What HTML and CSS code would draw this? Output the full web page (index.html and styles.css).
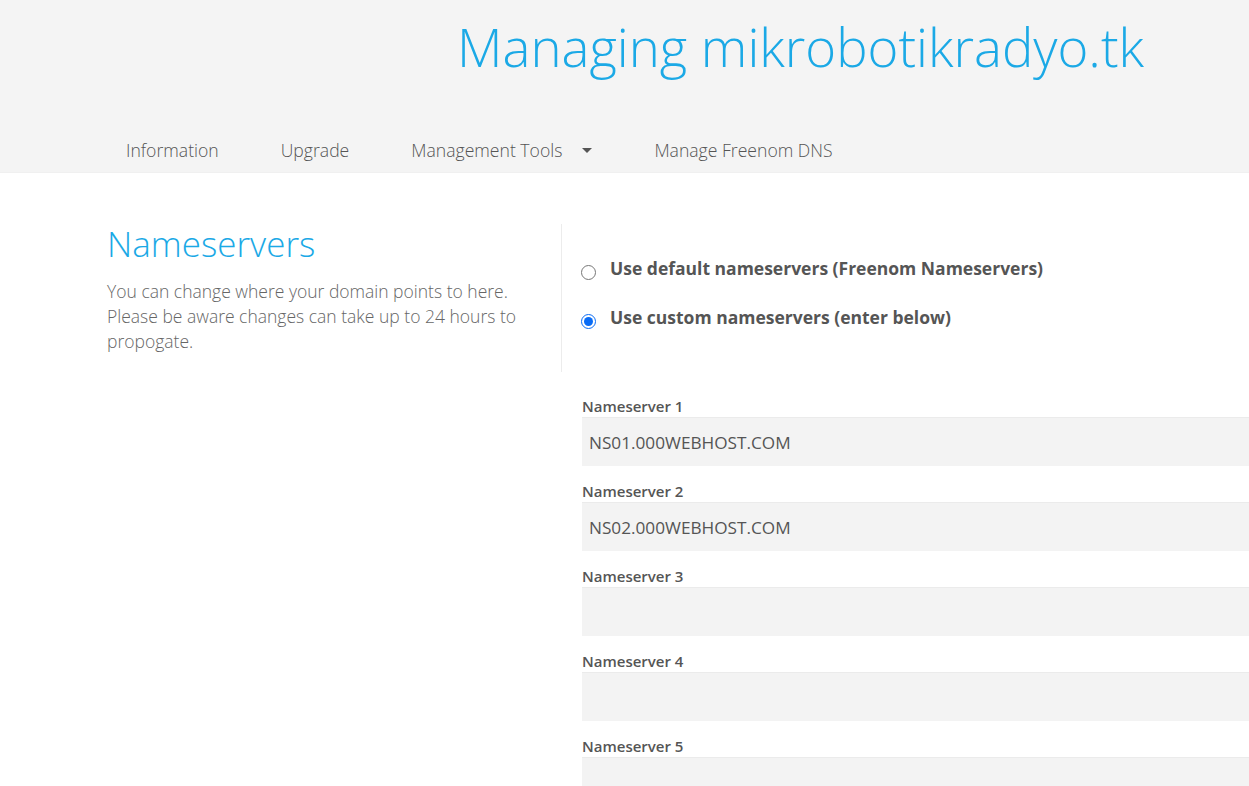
FILE: index.html
```html
<!DOCTYPE html>
<html>
<head>
<meta charset="utf-8">
<link rel="stylesheet" href="styles.css">
</head>
<body>
<header class="header">
  <h1 class="title">Managing mikrobotikradyo.tk</h1>
  <nav class="nav">
    <a class="nav-item">Information</a>
    <a class="nav-item">Upgrade</a>
    <a class="nav-item dropdown">Management Tools <span class="caret"></span></a>
    <a class="nav-item">Manage Freenom DNS</a>
  </nav>
</header>
<main class="main">
  <section class="top-row">
    <div class="intro">
      <h2 class="intro-title">Nameservers</h2>
      <p class="intro-text">You can change where your domain points to here. Please be aware changes can take up to 24 hours to propogate.</p>
    </div>
    <div class="choices">
      <label class="choice"><input type="radio" name="ns" class="radio"> <span>Use default nameservers (Freenom Nameservers)</span></label>
      <label class="choice"><input type="radio" name="ns" class="radio" checked> <span>Use custom nameservers (enter below)</span></label>
    </div>
  </section>
  <section class="fields">
    <div class="field"><label class="field-label">Nameserver 1</label><input class="field-input" type="text" value="NS01.000WEBHOST.COM"></div>
    <div class="field"><label class="field-label">Nameserver 2</label><input class="field-input" type="text" value="NS02.000WEBHOST.COM"></div>
    <div class="field"><label class="field-label">Nameserver 3</label><input class="field-input" type="text" value=""></div>
    <div class="field"><label class="field-label">Nameserver 4</label><input class="field-input" type="text" value=""></div>
    <div class="field"><label class="field-label">Nameserver 5</label><input class="field-input" type="text" value=""></div>
  </section>
</main>
</body>
</html>
```
FILE: styles.css
```css
html, body {
  margin: 0;
  padding: 0;
  overflow: hidden;
  background: #fff;
  font-family: "Open Sans", "Noto Sans", sans-serif;
  color: #555;
}
.header {
  background: #f4f4f4;
  height: 173px;
  box-sizing: border-box;
  border-bottom: 1px solid #f0f0f0;
}
.title {
  margin: 0;
  padding: 14px 0 0 457px;
  font-size: 52.7px;
  font-weight: 300;
  line-height: 66px;
  color: #1ba9e6;
  white-space: nowrap;
}
.nav {
  display: flex;
  gap: 62px;
  padding: 58px 0 0 126px;
}
.nav-item {
  font-size: 17.6px;
  font-weight: 300;
  color: #555;
  line-height: 24px;
  display: flex;
  align-items: center;
}
.caret {
  display: inline-block;
  width: 0;
  height: 0;
  margin-left: 20px;
  border-left: 5px solid transparent;
  border-right: 5px solid transparent;
  border-top: 5px solid #555;
}
.main {
  padding-left: 107px;
}
.top-row {
  display: flex;
  margin-top: 51px;
}
.intro {
  width: 455px;
  border-right: 1px solid #ececec;
  height: 148px;
  box-sizing: border-box;
}
.intro-title {
  margin: 0;
  font-size: 35px;
  font-weight: 300;
  line-height: 40px;
  color: #1ba9e6;
}
.intro-text {
  margin: 15px 0 0;
  font-size: 17.5px;
  font-weight: 300;
  line-height: 25px;
  color: #666;
  width: 440px;
}
.choices {
  padding: 39px 0 0 19px;
  display: flex;
  flex-direction: column;
  gap: 31px;
}
.choice {
  display: flex;
  align-items: center;
  font-size: 17.5px;
  font-weight: 700;
  color: #555;
  line-height: 26px;
  white-space: nowrap;
}
.choice span {
  margin-left: 14px;
  margin-top: -8px;
}
.radio {
  margin: 0;
  width: 15px;
  height: 15px;
  accent-color: #0a6cf5;
}
.fields {
  margin-left: 475px;
  padding-top: 24px;
  width: 800px;
  display: flex;
  flex-direction: column;
  gap: 15px;
}
.field {
  display: flex;
  flex-direction: column;
}
.field-label {
  font-size: 15px;
  font-weight: 600;
  color: #555;
  line-height: 20px;
  margin-bottom: 1px;
}
.field-input {
  border: none;
  border-top: 1px solid #ebebeb;
  background: #f3f3f3;
  height: 49px;
  box-sizing: border-box;
  padding: 0 7px;
  font-family: "Open Sans", "Noto Sans", sans-serif;
  font-size: 17.2px;
  color: #555;
  outline: none;
}
```
